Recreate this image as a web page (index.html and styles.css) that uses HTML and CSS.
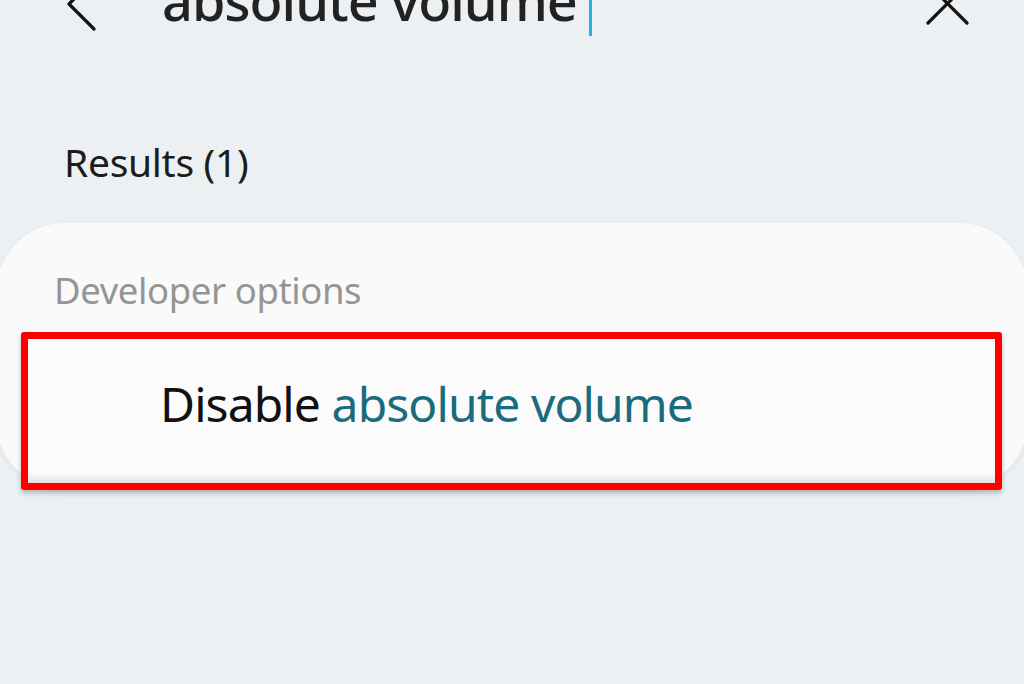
FILE: index.html
```html
<!DOCTYPE html>
<html lang="en">
<head>
  <meta charset="UTF-8" />
  <title>Search settings</title>
  <link rel="stylesheet" href="styles.css">
</head>
<body>

  <div class="search-bar">
    <svg class="icon back" width="40" height="60" viewBox="0 0 40 60">
      <polyline points="34,55 9,30 34,5" fill="none" stroke="#111" stroke-width="3.2" stroke-linecap="round" stroke-linejoin="round"/>
    </svg>
    <div class="query">absolute volume<span class="cursor"></span></div>
    <svg class="icon close" width="50" height="50" viewBox="0 0 50 50">
      <path d="M6 44 L45 5 M6 5 L45 44" fill="none" stroke="#111" stroke-width="3.2" stroke-linecap="round"/>
    </svg>
  </div>

  <div class="results-title">Results (1)</div>

  <div class="card">
    <div class="card-label">Developer options</div>
    <div class="result-row">
      <span class="plain">Disable </span><span class="match">absolute volume</span>
    </div>
  </div>

</body>
</html>
```

FILE: styles.css
```css
html { height: 100%; }

body {
  margin: 0;
  min-height: 100%;
  background: #edf0f2;
  font-family: "Noto Sans", sans-serif;
  padding-bottom: 120px;
  box-sizing: border-box;
}

.search-bar {
  display: flex;
  align-items: center;
  height: 60px;
  margin-top: -26px;
  padding: 0 52px 0 60px;
}

.icon { flex: none; }
.back { margin-right: 62px; }
.close { margin-left: auto; }

.query {
  font-size: 54px;
  line-height: 54px;
  font-weight: 500;
  color: #222;
  letter-spacing: -1px;
  display: flex;
  align-items: flex-start;
}

.cursor {
  display: inline-block;
  width: 3px;
  height: 63px;
  background: #1fb5e0;
  margin-left: 12px;
}

.results-title {
  font-size: 39px;
  line-height: 1.2;
  color: #1c1c1c;
  padding: 105px 0 0 64px;
  letter-spacing: -0.3px;
}

.card {
  margin: 37px -4px 0;
  background: #fafafb;
  border-radius: 70px;
  padding-top: 46px;
  box-shadow: 0 2px 6px rgba(0,0,0,0.06);
}

.card-label {
  font-size: 36.5px;
  line-height: 1.2;
  color: #959595;
  padding-left: 58px;
  letter-spacing: -0.4px;
}

.result-row {
  position: relative;
  margin: 19px 26px -15px 25px;
  border: 7px solid #ff0000;
  border-radius: 3px;
  height: 158px;
  box-sizing: border-box;
  display: flex;
  align-items: center;
  padding: 0 0 13px 132px;
  font-size: 48px;
  line-height: 1.2;
  letter-spacing: -0.9px;
  background: #fbfbfc;
  box-shadow: 0 3px 5px rgba(0,0,0,0.25), inset 0 -10px 8px -6px rgba(0,0,0,0.12);
}

.plain { color: #111; white-space: pre; }
.match { color: #1a6b7c; }
```
